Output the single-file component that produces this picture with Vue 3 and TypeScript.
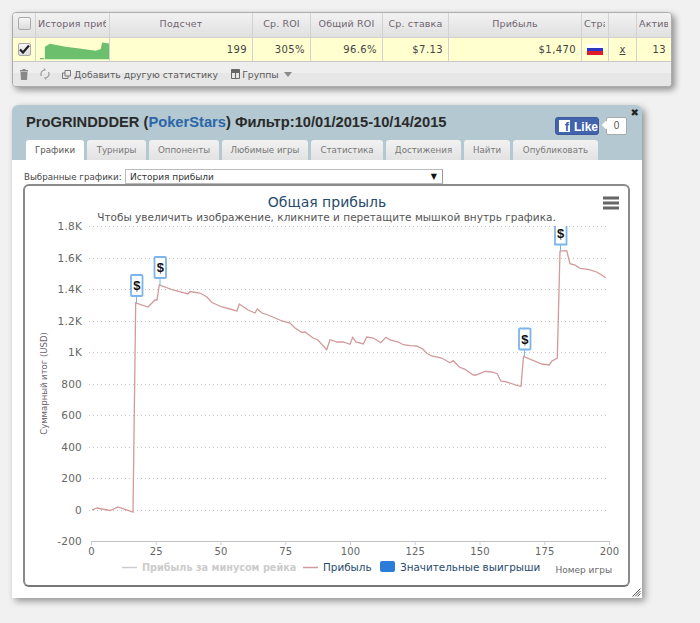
<script setup lang="ts">
const headers = [
  { t: 'История прибыль', c: 'left' },
  { t: 'Подсчет', c: '' },
  { t: 'Ср. ROI', c: '' },
  { t: 'Общий ROI', c: '' },
  { t: 'Ср. ставка', c: '' },
  { t: 'Прибыль', c: '' },
  { t: 'Страна', c: 'left' },
  { t: '', c: '' },
  { t: 'Активность', c: 'left' },
]
const tabs = [
  { t: 'Графики', w: 58 },
  { t: 'Турниры', w: 59 },
  { t: 'Оппоненты', w: 70 },
  { t: 'Любимые игры', w: 86 },
  { t: 'Статистика', w: 72 },
  { t: 'Достижения', w: 75 },
  { t: 'Найти', w: 46 },
  { t: 'Опубликовать', w: 85 },
]
const grid = [
  { l: '1.8K', y: 226 }, { l: '1.6K', y: 258 }, { l: '1.4K', y: 289 }, { l: '1.2K', y: 321 },
  { l: '1K', y: 352 }, { l: '800', y: 384 }, { l: '600', y: 415 }, { l: '400', y: 447 },
  { l: '200', y: 478 }, { l: '0', y: 510 },
]
const xs = [0, 25, 50, 75, 100, 125, 150, 175, 200].map((v) => ({ v, x: 91.5 + v * 2.59 }))
const line =
  '92,510 97,508 110,510.5 118,507 133,512 135.7,303 148,307 155,300 157,300 159.3,285 173,290 188,294 190,291.5 200,293 207,297 212,302.5 222,307 230,309 237,311 239.3,304 248,310 255,313 257.3,309 262,313 268,315 275,318 282,321 290,323 295,328 302,332.5 305,332 313,338 318,340 326.7,349.7 330,339.7 337,342 343,342 350,344.3 352.7,337.3 356,342 363.3,344 366.7,337 373.3,338 380.7,342.7 386,337.3 390,340 398.3,342 403.3,344.7 410,345.7 416.7,346 422.7,349 426.7,353.3 431.7,356 441.7,358 450,362.7 453.3,360.7 459.3,367 465,369.3 473.3,375 476,375 485,371.3 491.7,372 497.3,373.7 500.7,381 505,381.7 510,383 516.7,385.3 521,386.3 523.5,356.5 541.7,364 549.3,365 551.7,361.3 557.3,358 560,251 566.7,250.7 570,263.7 575,265 580,268.3 588.3,269.3 596.7,272 601.7,275 606,278'
const flags = [
  { x: 131, y: 275, sx: 136.5, sy: 303 },
  { x: 154.5, y: 257, sx: 160, sy: 285 },
  { x: 519, y: 328.5, sx: 524.5, sy: 356 },
]
</script>

<template>
  <div class="page">
    <section class="stats">
      <div class="row head">
        <div class="cell box"><span class="check"></span></div>
        <div v-for="h in headers" :key="h.t + h.c" class="cell" :class="h.c">
          <span class="clip">{{ h.t }}</span>
        </div>
      </div>
      <div class="row data">
        <div class="cell box">
          <span class="check on">
            <svg width="11" height="10" viewBox="0 0 11 10"><path d="M1 5.5 4 8.5 10 1.5" fill="none" stroke="#222" stroke-width="2.2" /></svg>
          </span>
        </div>
        <div class="cell spark">
          <svg width="74" height="23" viewBox="36 38 74 23">
            <path d="M40 59.5V58.2H44V59.5ZM45 59.5V46.7L50 43.7L66 46.7L80 48.5L96.7 50.7L101.7 49L103 42.3L110 43.3V59.5Z" fill="#6cbf6c" />
          </svg>
        </div>
        <div class="cell num">199</div>
        <div class="cell num">305%</div>
        <div class="cell num">96.6%</div>
        <div class="cell num">$7.13</div>
        <div class="cell num">$1,470</div>
        <div class="cell flagcell"><span class="ru"></span></div>
        <div class="cell x"><u>x</u></div>
        <div class="cell num">13</div>
      </div>
      <div class="tools">
        <svg class="ic trash" width="8" height="11" viewBox="0 0 8 11"><path d="M0 1H8V2.5H0ZM2.5 0H5.5V1H2.5ZM.5 3H7.5L7 11H1Z" fill="#888" /></svg>
        <svg class="ic sync" width="10" height="12" viewBox="0 0 10 12"><path d="M1.5 8A4 4 0 0 1 5 2L4 .5M8.5 4A4 4 0 0 1 5 10L6 11.5" fill="none" stroke="#999" stroke-width="1.2" /></svg>
        <svg class="ic add" width="9" height="9" viewBox="0 0 9 9"><path d="M3 .5H8.5V6H3ZM3 3H.5V8.5H6V6" fill="none" stroke="#777" /></svg>
        <span class="tool-text">Добавить другую статистику</span>
        <svg class="ic grp" width="9" height="10" viewBox="0 0 9 10"><path d="M.5 .5H8.5V9.5H.5ZM.5 3.5H8.5M4.5 3.5V9.5" fill="none" stroke="#666" /><path d="M.5 .5H8.5V3.5H.5Z" fill="#666" /></svg>
        <span class="tool-text groups">Группы</span>
        <span class="caret"></span>
      </div>
    </section>

    <section class="panel">
      <header class="panel-head">
        <div class="title-row">
          <h1>ProGRINDDDER (<span class="room">PokerStars</span>) Фильтр:10/01/2015-10/14/2015</h1>
          <div class="like">
            <span class="fb"><span class="f">f</span>Like</span>
            <span class="count">0</span>
          </div>
        </div>
        <nav class="tabs">
          <span
            v-for="(t, i) in tabs"
            :key="t.t"
            class="tab"
            :class="{ active: i === 0 }"
            :style="{ width: t.w + 'px' }"
          >{{ t.t }}</span>
        </nav>
      </header>
      <span class="close">✖</span>
      <div class="panel-body">
        <div class="picker">
          <span class="picker-label">Выбранные графики:</span>
          <div class="select"><span>История прибыли</span><i>▼</i></div>
        </div>
        <div class="chart">
          <svg width="603" height="399" viewBox="25 186 603 399">
            <text x="327" y="207" text-anchor="middle" class="c-title">Общая прибыль</text>
            <text x="326.5" y="221" text-anchor="middle" class="c-sub">Чтобы увеличить изображение, кликните и перетащите мышкой внутрь графика.</text>
            <path d="M603 198H619M603 203H619M603 208H619" stroke="#666" stroke-width="3" />
            <g v-for="g in grid" :key="g.l">
              <line x1="89" x2="609" :y1="g.y + 0.5" :y2="g.y + 0.5" class="gl" />
              <text x="82" :y="g.y + 4" text-anchor="end" class="lab">{{ g.l }}</text>
            </g>
            <text x="82" y="545" text-anchor="end" class="lab">-200</text>
            <line x1="91" x2="609.5" y1="541.5" y2="541.5" stroke="#c0c0c0" />
            <g v-for="t in xs" :key="t.v">
              <line :x1="t.x" :x2="t.x" y1="541" y2="545" stroke="#c0d0e0" />
              <text :x="t.x" y="555" text-anchor="middle" class="lab xl">{{ t.v }}</text>
            </g>
            <text transform="translate(47 383.5) rotate(-90)" text-anchor="middle" class="y-title">Суммарный итог (USD)</text>
            <polyline :points="line" fill="none" stroke="#d29a9a" stroke-width="1.3" />
            <g v-for="f in flags" :key="f.x">
              <line :x1="f.sx" :x2="f.sx" :y1="f.y + 21" :y2="f.sy" stroke="#7cb5ec" />
              <rect :x="f.x" :y="f.y" width="11.5" height="21" rx="1" fill="#fff" stroke="#7cb5ec" stroke-width="1.8" />
              <text :x="f.x + 5.8" :y="f.y + 15" text-anchor="middle" class="dollar">$</text>
            </g>
            <line x1="560.5" x2="560.5" y1="245" y2="251" stroke="#7cb5ec" />
            <path d="M555 226V244.5H566.5V226" fill="#fff" stroke="#7cb5ec" stroke-width="1.8" />
            <text x="560.7" y="238" text-anchor="middle" class="dollar">$</text>
            <line x1="122" x2="137" y1="567.5" y2="567.5" stroke="#ccc" stroke-width="1.5" />
            <text x="142" y="571" class="leg off">Прибыль за минусом рейка</text>
            <line x1="303" x2="318" y1="567.5" y2="567.5" stroke="#d29a9a" stroke-width="1.5" />
            <text x="323" y="571" class="leg">Прибыль</text>
            <rect x="380" y="561" width="15" height="11" rx="2" fill="#2b7bd8" />
            <text x="400" y="571" class="leg">Значительные выигрыши</text>
            <text x="612" y="573" text-anchor="end" class="x-title">Номер игры</text>
          </svg>
        </div>
      </div>
      <svg class="grip" width="9" height="9" viewBox="0 0 9 9"><path d="M8.5 .5 .5 8.5M8.5 3 3 8.5M8.5 5.5 5.5 8.5" stroke="#555" /></svg>
    </section>
  </div>
</template>

<style scoped>
.page {
  width: 700px;
  height: 623px;
  box-sizing: border-box;
  padding: 12px 0 0 12px;
  overflow: hidden;
  background: #f1f1f1;
  font-family: "DejaVu Sans", sans-serif;
}
.stats {
  width: 660px;
  height: 75px;
  box-sizing: border-box;
  border: 1px solid #acacac;
  border-radius: 4px;
  overflow: hidden;
  background: #eee;
  box-shadow: 3px 3px 6px rgba(0, 0, 0, 0.4);
}
.row {
  display: grid;
  grid-template-columns: 23px 74px 143px 58px 72px 66px 133px 27px 28px 34px;
}
.head {
  height: 25px;
  box-sizing: border-box;
  border-bottom: 1px solid #d0d0d0;
  background: linear-gradient(#f2f2f2, #e0e0e0);
  color: #6f6470;
}
.data {
  height: 24px;
  box-sizing: border-box;
  border-bottom: 1px solid #c8c8c8;
  background: #ffffd0;
  color: #444;
}
.cell {
  box-sizing: border-box;
  border-right: 1px solid #d2d2d2;
  font-size: 9.5px;
  letter-spacing: 0.15px;
  display: flex;
  align-items: center;
  justify-content: center;
  overflow: hidden;
  white-space: nowrap;
  min-width: 0;
}
.head .cell {
  padding-bottom: 3px;
}
.data .cell {
  padding-bottom: 1px;
}
.cell:last-child {
  border-right: 0;
}
.cell.left {
  justify-content: flex-start;
  padding-left: 2px;
  padding-right: 3px;
}
.clip {
  overflow: hidden;
}
.cell.num {
  justify-content: flex-end;
  padding-right: 5px;
  font-size: 10px;
  letter-spacing: 0.4px;
}
.cell.spark {
  padding: 0;
}
.cell.x {
  font-size: 10px;
}
.check {
  width: 11px;
  height: 11px;
  border: 1px solid #aaa;
  border-radius: 2px;
  background: linear-gradient(#f6f6f6, #dcdcdc);
  display: flex;
  align-items: center;
  justify-content: center;
}
.ru {
  width: 16px;
  height: 11px;
  background: linear-gradient(#fdfdfd 0 33%, #2a38c8 33% 66%, #e01c2c 66%);
}
.tools {
  height: 24px;
  background: linear-gradient(#eee 0 11px, #e6e6e6 11px);
  display: flex;
  align-items: center;
  font-size: 9.3px;
  color: #5a5a5a;
  padding-left: 7px;
}
.ic {
  flex: none;
}
.sync {
  margin-left: 12px;
}
.add {
  margin-left: 12px;
}
.tool-text {
  margin-left: 3px;
}
.grp {
  margin-left: 13px;
}
.groups {
  margin-left: 2px;
}
.caret {
  margin-left: 5px;
  border: 4px solid transparent;
  border-top: 5px solid #888;
  border-bottom: 0;
}
.panel {
  position: relative;
  width: 630px;
  height: 493px;
  margin-top: 18px;
  border-radius: 6px 6px 0 0;
  background: #fff;
  box-shadow: 3px 3px 7px rgba(0, 0, 0, 0.4);
}
.panel-head {
  height: 55px;
  box-sizing: border-box;
  padding: 8px 0 0 14px;
  background: #b3c8d0;
  border-radius: 6px 6px 0 0;
  display: flex;
  flex-direction: column;
  justify-content: space-between;
}
.title-row {
  display: flex;
  justify-content: space-between;
  align-items: flex-start;
  padding-right: 15px;
}
h1 {
  margin: 0;
  font: bold 14.7px/18px "Liberation Sans", sans-serif;
  color: #2a2a2a;
  white-space: nowrap;
}
.room {
  color: #2b67a8;
}
.like {
  display: flex;
  gap: 7px;
  margin-top: 4px;
}
.fb {
  width: 44px;
  height: 18px;
  box-sizing: border-box;
  padding: 2px 0 0 3px;
  background: #4263ad;
  border: 1px solid #3b5998;
  border-radius: 3px;
  color: #fff;
  font: bold 12px/14px "Liberation Sans", sans-serif;
  display: flex;
  gap: 4px;
}
.f {
  width: 12px;
  height: 12px;
  background: #fff;
  color: #4263ad;
  font: bold 13px/14px "Liberation Sans", sans-serif;
  text-align: right;
  padding-right: 1px;
  box-sizing: border-box;
}
.count {
  position: relative;
  width: 21px;
  height: 18px;
  box-sizing: border-box;
  background: #fff;
  border: 1px solid #aaa;
  border-radius: 2px;
  font: 10px/16px "Liberation Sans", sans-serif;
  color: #555;
  text-align: center;
}
.count::before {
  content: "";
  position: absolute;
  left: -4px;
  top: 4px;
  width: 6px;
  height: 6px;
  background: #fff;
  transform: rotate(45deg);
}
.tabs {
  display: flex;
  gap: 3px;
}
.tab {
  height: 20px;
  box-sizing: border-box;
  padding-top: 3px;
  border-radius: 3px 3px 0 0;
  background: linear-gradient(#f2f2f2, #e2e2e2);
  font-size: 8.7px;
  line-height: 15px;
  text-align: center;
  color: #787878;
  white-space: nowrap;
}
.tab.active {
  background: #fff;
  color: #555;
}
.close {
  position: absolute;
  right: 3px;
  top: 2px;
  font-size: 10px;
  line-height: 12px;
  color: #222;
}
.panel-body {
  padding: 9px 0 0 11px;
}
.picker {
  display: flex;
  align-items: center;
  gap: 3px;
  height: 15px;
  padding-left: 1px;
}
.picker-label {
  width: 98px;
  font-size: 8.7px;
  color: #444;
  white-space: nowrap;
}
.select {
  width: 318px;
  height: 15px;
  box-sizing: border-box;
  border: 1px solid #bbb;
  border-right-color: #999;
  background: #fff;
  display: flex;
  justify-content: space-between;
  align-items: center;
  padding: 0 5px 0 4px;
  font-size: 9px;
  color: #333;
}
.select i {
  font-style: normal;
  font-size: 8px;
  color: #111;
}
.chart {
  width: 607px;
  height: 403px;
  box-sizing: border-box;
  border: 2px solid #8a8a8a;
  border-radius: 6px;
  background: #fff;
  border-bottom-color: #777;
}
.chart svg {
  display: block;
}
.grip {
  position: absolute;
  right: 1px;
  bottom: 1px;
}
.gl {
  stroke: #c4c4c4;
  stroke-dasharray: 1 3;
}
.lab {
  font-size: 10.5px;
  letter-spacing: 0.2px;
  fill: #666;
}
.xl {
  font-size: 10px;
}
.c-title {
  font-size: 14px;
  fill: #274b6d;
}
.c-sub {
  font-size: 10.5px;
  fill: #555;
}
.y-title {
  font-size: 8.5px;
  fill: #6f5f6f;
}
.x-title {
  font-size: 9px;
  fill: #6a6a6a;
}
.leg {
  font-size: 10.4px;
  fill: #274b6d;
}
.leg.off {
  fill: #ccc;
  font-weight: bold;
  font-size: 9.7px;
}
.dollar {
  font-family: "Liberation Sans", sans-serif;
  font-size: 13px;
  font-weight: bold;
  fill: #111;
}
</style>

<style>
html,
body {
  background: #f1f1f1;
}
</style>
